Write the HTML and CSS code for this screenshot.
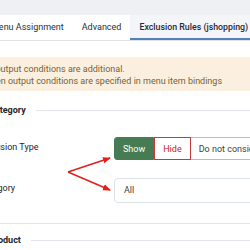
FILE: index.html
```html
<!DOCTYPE html>
<html>
    <head>
        <meta name="viewport" content="width=device-width"/>
        <title>Exclusion Rules</title>
        <link rel="stylesheet" href="styles.css">
    </head>
    <body>
        <div class="content">
            <ul class="tabs">
                <li class="tab">Menu Assignment</li>
                <li class="tab">Advanced</li>
                <li class="tab active">Exclusion Rules (jshopping)</li>
            </ul>
            <div class="panel">
                <div class="alert">
                    <p>All output conditions are additional.</p>
                    <p>When output conditions are specified in menu item bindings</p>
                </div>

                <fieldset class="options">
                    <legend>Category</legend>
                    <div class="fields">
                        <div class="row">
                            <label>Exclusion Type</label>
                            <div class="btn-group">
                                <span class="btn show">Show</span>
                                <span class="btn hide">Hide</span>
                                <span class="btn skip">Do not consider</span>
                            </div>
                        </div>
                        <div class="row">
                            <label>Category</label>
                            <div class="select">All</div>
                        </div>
                    </div>
                </fieldset>

                <fieldset class="options">
                    <legend>Product</legend>
                </fieldset>
            </div>
        </div>

        <!-- стрелки-пометки поверх формы -->
        <svg class="arrows" width="250" height="250" viewBox="0 0 250 250">
            <defs>
                <marker id="head" markerWidth="8" markerHeight="8" refX="7" refY="4" orient="auto" markerUnits="userSpaceOnUse">
                    <path d="M0,0.8 L8,4 L0,7.2 Z" fill="#e4201c"/>
                </marker>
            </defs>
            <line x1="68" y1="172" x2="110" y2="158" stroke="#e4201c" stroke-width="1.6" marker-end="url(#head)"/>
            <line x1="68" y1="172" x2="110" y2="190" stroke="#e4201c" stroke-width="1.6" marker-end="url(#head)"/>
        </svg>
    </body>
</html>
```

FILE: styles.css
```css
body {
    margin: 0;
    background: #eef0f4;
    font-family: Roboto, "Liberation Sans", sans-serif;
    font-size: 9px;
    color: #22262a;
    overflow: hidden;
    position: relative;
    height: 250px;
}
.content {
    margin-left: -30px;
    width: 330px;
    padding-top: 15px;
}
.tabs {
    display: flex;
    margin: 0;
    padding: 0 0 0 12px;
    list-style: none;
    background: #fff;
    border-bottom: 1px solid #dfe3e8;
    height: 25px;
}
.tab {
    padding: 0 9px;
    line-height: 25px;
    color: #2b2f33;
}
.tab.active {
    background: #f3f5f9;
    color: #1f2a3a;
    font-size: 8.8px;
    font-weight: 500;
    box-shadow: inset 0 -2px 0 #5380b8;
    border-right: 1px solid #dfe3e8;
}
.panel {
    background: #fff;
    padding-top: 16px;
    height: 200px;
}
.alert {
    background: #fbf0df;
    color: #7a6136;
    padding: 6px 13px 4px;
    line-height: 12px;
}
.alert p {
    margin: 0;
    white-space: nowrap;
}
.options {
    display: block;
    margin: 13px 0 0;
    padding: 0 8px 20px;
    border: 1px solid #e2e6eb;
    border-radius: 3px;
}
.options legend {
    padding: 0 10px;
    font-weight: 700;
    line-height: 12px;
    color: #1f2328;
}
.options + .options {
    margin-top: 10px;
}
.fields {
    display: flex;
    flex-direction: column;
    gap: 18px;
    padding-top: 21px;
}
.row {
    display: flex;
    align-items: flex-start;
}
.row label {
    width: 135px;
    flex: none;
    padding-top: 4px;
    line-height: 12px;
}
.btn-group {
    display: flex;
    height: 23px;
}
.btn {
    display: flex;
    align-items: center;
    padding: 0 8px;
    border: 1px solid #b5bcc3;
    white-space: nowrap;
    color: #3a3f44;
}
.btn.show {
    background: #467c53;
    border-color: #467c53;
    color: #fff;
    border-radius: 3px 0 0 3px;
}
.btn.hide {
    border-color: #c8393a;
    color: #c52827;
}
.btn.skip {
    border-left: none;
}
.select {
    width: 160px;
    height: 23px;
    line-height: 23px;
    padding-left: 9px;
    border: 1px solid #dde2e7;
    border-radius: 4px;
    color: #3a3f44;
}
.arrows {
    position: absolute;
    left: 0;
    top: 0;
    pointer-events: none;
}
```
